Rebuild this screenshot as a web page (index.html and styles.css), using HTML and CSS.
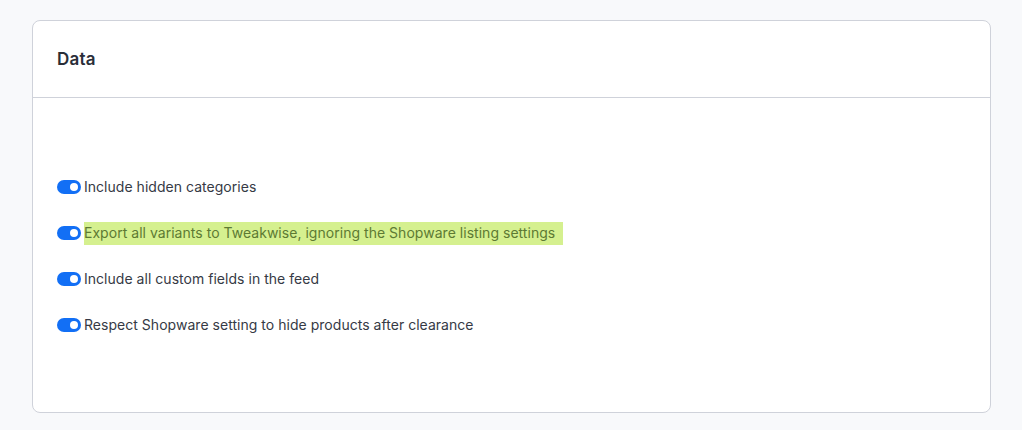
FILE: index.html
```html
<!DOCTYPE html>
<html lang="en">
<head>
<meta charset="utf-8">
<title>Data</title>
<link rel="stylesheet" href="styles.css">
</head>
<body>
<div class="page">
  <section class="card">
    <header class="card-header">
      <h2 class="card-title">Data</h2>
    </header>
    <div class="card-body">
      <label class="switch-row">
        <span class="switch"><span class="knob"></span></span>
        <span class="label">Include hidden categories</span>
      </label>
      <label class="switch-row">
        <span class="switch"><span class="knob"></span></span>
        <span class="label highlight">Export all variants to Tweakwise, ignoring the Shopware listing settings</span>
      </label>
      <label class="switch-row">
        <span class="switch"><span class="knob"></span></span>
        <span class="label">Include all custom fields in the feed</span>
      </label>
      <label class="switch-row">
        <span class="switch"><span class="knob"></span></span>
        <span class="label">Respect Shopware setting to hide products after clearance</span>
      </label>
    </div>
  </section>
</div>
</body>
</html>
```

FILE: styles.css
```css
* { box-sizing: border-box; }
html, body {
  margin: 0;
  padding: 0;
  background: #f8f9fb;
  font-family: Inter, "Noto Sans", sans-serif;
  color: #3b3f4b;
}
.page {
  padding: 20px 31px 17px 32px;
}
.card {
  background: #ffffff;
  border: 1px solid #cfd2da;
  border-radius: 8px;
  height: 393px;
}
.card-header {
  height: 77px;
  border-bottom: 1px solid #cfd2da;
  padding: 0 24px;
  display: flex;
  align-items: center;
}
.card-title {
  margin: 0;
  font-size: 17px;
  font-weight: 600;
  color: #2a2e38;
  letter-spacing: 0.2px;
}
.card-body {
  padding: 78px 24px 0 24px;
  display: flex;
  flex-direction: column;
  gap: 24px;
}
.switch-row {
  display: flex;
  align-items: center;
  height: 22px;
  gap: 3px;
}
.switch {
  width: 24px;
  height: 14px;
  border-radius: 7px;
  background: #126ff5;
  display: flex;
  align-items: center;
  justify-content: flex-end;
  padding-right: 3px;
  flex: none;
}
.knob {
  width: 8px;
  height: 8px;
  border-radius: 50%;
  background: #ffffff;
}
.label {
  font-size: 14px;
  line-height: 22px;
  color: #363a45;
  letter-spacing: 0.03px;
}
.highlight {
  background: #d5f08f;
  color: #5d7a33;
  padding-right: 8px;
  height: 23px;
}
```
